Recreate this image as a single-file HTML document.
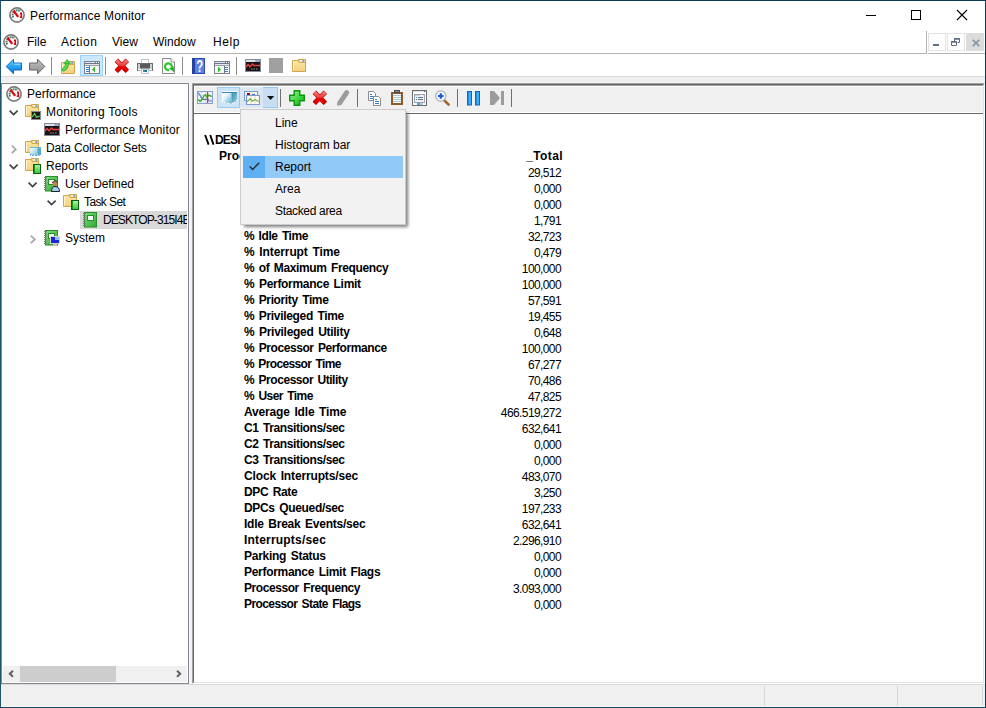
<!DOCTYPE html>
<html><head><meta charset="utf-8">
<style>
*{margin:0;padding:0;box-sizing:border-box}
html,body{width:986px;height:708px;overflow:hidden;background:#fff}
body{font-family:"Liberation Sans",sans-serif;font-size:12px;color:#000;position:relative}
.a{position:absolute}
.t{position:absolute;line-height:14px;white-space:nowrap}
.b{font-weight:bold}
svg{position:absolute;overflow:visible}
</style></head><body>
<svg width="0" height="0" style="position:absolute">
<defs>
<linearGradient id="gBlue" x1="0" y1="0" x2="0" y2="1"><stop offset="0" stop-color="#6cd0ff"/><stop offset=".5" stop-color="#2aa4f0"/><stop offset="1" stop-color="#0a6ed0"/></linearGradient>
<linearGradient id="gBlueH" x1="0" y1="0" x2="1" y2="0"><stop offset="0" stop-color="#0a78d8"/><stop offset=".6" stop-color="#40c0ff"/><stop offset="1" stop-color="#1a88e0"/></linearGradient>
<linearGradient id="gGray" x1="0" y1="0" x2="0" y2="1"><stop offset="0" stop-color="#c4c4c4"/><stop offset="1" stop-color="#8c8c8c"/></linearGradient>
<linearGradient id="gFold" x1="0" y1="0" x2="0" y2="1"><stop offset="0" stop-color="#fde6a4"/><stop offset="1" stop-color="#f3d07e"/></linearGradient>
<linearGradient id="gGreen" x1="0" y1="0" x2="1" y2="1"><stop offset="0" stop-color="#9cf59c"/><stop offset=".6" stop-color="#3cd03c"/><stop offset="1" stop-color="#18a018"/></linearGradient>
<linearGradient id="gRed" gradientUnits="userSpaceOnUse" x1="0" y1="0" x2="0" y2="16"><stop offset="0" stop-color="#f28a8a"/><stop offset=".45" stop-color="#f04040"/><stop offset=".55" stop-color="#e80000"/><stop offset="1" stop-color="#d00000"/></linearGradient>
<linearGradient id="gCube" x1="0" y1="0" x2="1" y2="1"><stop offset="0" stop-color="#ffffff"/><stop offset="1" stop-color="#7cc4dc"/></linearGradient>
<linearGradient id="gBook" x1="0" y1="0" x2="1" y2="1"><stop offset="0" stop-color="#7ee07e"/><stop offset="1" stop-color="#2ea82e"/></linearGradient>
<symbol id="iPerf" viewBox="0 0 16 16">
 <circle cx="8" cy="8" r="7.1" fill="#fff" stroke="#7c7c7c" stroke-width="1.7"/>
 <path d="M4.2 10.4A4.8 4.8 0 0 1 11.4 4.3" fill="none" stroke="#4a8068" stroke-width="2" stroke-dasharray="1.6 .5"/>
 <path d="M4.4 3.6L9.2 9.9" stroke="#e8000c" stroke-width="2.3"/>
 <path d="M11 6.4H12.3V10.3H10.8" fill="none" stroke="#e0000c" stroke-width="1.6"/>
</symbol>
<symbol id="iFolder" viewBox="0 0 14 13">
 <path d="M0.5 1.5H6L7.3 3.5H13.5V12.5H0.5Z" fill="url(#gFold)" stroke="#d0a650"/>
 <path d="M6.2 0.5H13.5V3.5H7.5Z" fill="#f9e0a0" stroke="#d0a650"/>
 <rect x="8" y="1.5" width="2.5" height="1" fill="#fff"/>
 <rect x="10.3" y="1.3" width="2" height="1.4" fill="#4a8ee0"/>
 <path d="M1.5 2.5V11.5" stroke="#fff4cc"/>
</symbol>
<symbol id="iMonMini" viewBox="0 0 10 9">
 <rect x="0.5" y="0.5" width="9" height="8" fill="#241616" stroke="#878c96"/>
 <path d="M1.2 6L3.6 2.5L5.4 6.2L8.8 5.2" fill="none" stroke="#4ed24e" stroke-width="1.3"/>
</symbol>
<symbol id="iPerfWin" viewBox="0 0 16 13">
 <rect x="0.5" y="0.5" width="15" height="12" fill="#1c1414" stroke="#868b95"/>
 <rect x="1" y="1" width="14" height="2" fill="#dde2ec"/>
 <rect x="10.5" y="1.4" width="1.2" height="1.2" fill="#3a5aa0"/><rect x="12.3" y="1.4" width="1.2" height="1.2" fill="#3a5aa0"/><rect x="14" y="1.4" width="1" height="1.2" fill="#3a5aa0"/>
 <path d="M1 8L3 5.5L5 7.8L7.5 5L9 6.5H15" fill="none" stroke="#e84040" stroke-width="1.4"/>
 <path d="M6 10H7.5M8.5 10H10M11 10H12.5" stroke="#909090"/>
</symbol>
<symbol id="iBook" viewBox="0 0 16 16">
 <rect x="2.5" y="0.5" width="12" height="14.5" fill="url(#gBook)" stroke="#2a8f2a"/>
 <rect x="5.5" y="3.5" width="6" height="5" fill="#fff" stroke="#2a8f2a"/>
 <path d="M1 1.5H3.5M1 3.5H3.5M1 5.5H3.5M1 7.5H3.5M1 9.5H3.5M1 11.5H3.5M1 13.5H3.5" stroke="#7a7a7a" stroke-width="1"/>
</symbol>
<symbol id="iGreenTab" viewBox="0 0 8 10">
 <rect x="0.5" y="0.5" width="7" height="9" fill="#189818" stroke="#0a600a"/>
 <rect x="2" y="1" width="5" height="8" fill="url(#gGTab)"/>
</symbol>
<linearGradient id="gGTab" x1="0" y1="0" x2="0" y2="1"><stop offset="0" stop-color="#a8f4a8"/><stop offset="1" stop-color="#3cc83c"/></linearGradient>
<symbol id="iCyl" viewBox="0 0 11 9">
 <rect x="0" y="0" width="11" height="1" fill="#6ab8d4"/>
 <path d="M0 1H7.5V8.5L0 7.5Z" fill="url(#gCube)"/>
 <path d="M7.5 1H11V7L7.5 8.5Z" fill="#58aac8"/>
 <g fill="#3a8ad8"><circle cx="0.6" cy="7.6" r=".8"/><circle cx="3" cy="8.3" r=".8"/><circle cx="6" cy="8.6" r=".8"/><circle cx="9" cy="8" r=".8"/><circle cx="10.6" cy="7" r=".8"/></g>
</symbol>
<symbol id="iPerson" viewBox="0 0 9 12">
 <circle cx="4" cy="3.5" r="2.5" fill="#c08050"/>
 <path d="M1.5 3C1.8 1.2 3 0.8 4 0.8C5.5 0.8 6.5 2 6.5 3.5" stroke="#303030" fill="none"/>
 <path d="M0.5 11.5Q0.5 6.5 4 6.5Q8.5 6.5 8.5 11.5Z" fill="#a8cef0" stroke="#18202a"/>
</symbol>
<symbol id="iScreen" viewBox="0 0 10 10">
 <rect x="0.5" y="0.5" width="9" height="7" fill="#1828d8" stroke="#d8d4c8"/>
 <rect x="5" y="1" width="4" height="3" fill="#9ab8f8"/>
 <rect x="3" y="8" width="4" height="2" fill="#c8c4b8"/>
</symbol>
</defs>
</svg>

<!-- window border -->
<div class="a" style="left:0;top:0;width:986px;height:708px;border:1px solid #0b3a5a;border-top-color:#0b3d5b;border-left-color:#1f566b;border-bottom-color:#0f4860;z-index:50"></div>

<!-- title bar -->
<svg style="left:9px;top:7px" width="16" height="16"><use href="#iPerf"/></svg>
<div class="t" style="left:30px;top:9px;letter-spacing:0.17px">Performance Monitor</div>
<div class="a" style="left:866px;top:15px;width:10px;height:1px;background:#000"></div>
<div class="a" style="left:911px;top:10px;width:10px;height:10px;border:1px solid #000"></div>
<svg style="left:957px;top:10px" width="10" height="10"><path d="M0 0L10 10M10 0L0 10" stroke="#000" stroke-width="1.1"/></svg>

<!-- menu bar -->
<svg style="left:3px;top:34px" width="16" height="16"><use href="#iPerf"/></svg>
<div class="t" style="left:27px;top:35px">File</div>
<div class="t" style="left:61px;top:35px;letter-spacing:0.5px">Action</div>
<div class="t" style="left:112px;top:35px">View</div>
<div class="t" style="left:153px;top:35px">Window</div>
<div class="t" style="left:213px;top:35px;letter-spacing:0.6px">Help</div>
<div class="a" style="left:1px;top:53px;width:926px;height:1px;background:#b4b4b4"></div>
<div class="a" style="left:926px;top:31px;width:1px;height:23px;background:#b4b4b4"></div>
<div class="a" style="left:928px;top:53px;width:57px;height:1px;background:#b4b4b4"></div>
<div class="a" style="left:928px;top:33px;width:18px;height:18px;border:1px solid #e3e3e3;background:#fff"></div>
<div class="a" style="left:933px;top:44px;width:6px;height:2px;background:#5f6f80"></div>
<div class="a" style="left:947px;top:33px;width:18px;height:18px;border:1px solid #e3e3e3;background:#fff"></div>
<svg style="left:951px;top:38px" width="10" height="8"><path d="M3.5 0.5H8.5V4.5H6.5M0.5 3.5H5.5V7.5H0.5Z M3.5 0.5V3.5" fill="none" stroke="#5f6f80"/><path d="M3 1H9M0 4H6" stroke="#5f6f80" stroke-width="1.4"/></svg>
<div class="a" style="left:966px;top:33px;width:18px;height:18px;background:#dcdcdc"></div>
<svg style="left:972px;top:39px" width="8" height="8"><path d="M0.8 0.8L7.2 7.2M7.2 0.8L0.8 7.2" stroke="#8796a8" stroke-width="1.8"/></svg>

<!-- main toolbar -->
<svg style="left:5px;top:58px" width="18" height="17"><path d="M1.2 8.5L8.5 1.2V5H16.5V12H8.5V15.8Z" fill="url(#gBlue)" stroke="#1a68c0"/><path d="M9.5 6.2H15.5" stroke="#a8e4ff" stroke-width="1"/></svg>
<svg style="left:28px;top:58px" width="18" height="17"><path d="M16.8 8.5L9.5 1.2V5H1.5V12H9.5V15.8Z" fill="url(#gGray)" stroke="#666"/></svg>
<div class="a" style="left:51px;top:57px;width:1px;height:18px;background:#8c8c8c"></div>
<svg style="left:61px;top:59px" width="14" height="15"><use href="#iFolder" x="0" y="2" width="14" height="13"/><path d="M2.6 10.6C4.6 9.2 6.2 7.2 6.4 3.8" fill="none" stroke="#2a9a2a" stroke-width="3.6" stroke-linecap="round"/><path d="M2.6 10.6C4.6 9.2 6.2 7.2 6.4 3.8" fill="none" stroke="#52e052" stroke-width="2.4" stroke-linecap="round"/><path d="M2.8 4.6L6.1 0.4L9.8 4.5Z" fill="#48d848" stroke="#2a9a2a" stroke-width="0.6" stroke-linejoin="round"/></svg>
<div class="a" style="left:80px;top:55px;width:23px;height:21px;background:#cce8ff;border:1px solid #99d1ff"></div>
<svg style="left:84px;top:61px" width="16" height="13"><rect width="16" height="13" fill="#7b808b"/><rect x="1" y="1" width="14" height="11" fill="#fff"/><rect x="1" y="1" width="10" height="1" fill="#e2e5ea"/><rect x="11" y="1" width="4" height="1" fill="#6a7590"/><rect x="12" y="1" width="1" height="1" fill="#fff"/><rect x="14" y="1" width="1" height="1" fill="#fff"/><rect x="1" y="2" width="14" height="1" fill="#6a7590"/><rect x="1" y="3" width="14" height="1" fill="#e2e5ea"/><rect x="1" y="4" width="14" height="1" fill="#9a9fa8"/><rect x="5" y="5" width="1" height="7" fill="#6a7590"/><rect x="6" y="5" width="9" height="7" fill="#f6f6f6"/><rect x="2" y="6" width="3" height="1" fill="#3a78c8"/><rect x="2" y="8" width="3" height="1" fill="#3a78c8"/><rect x="2" y="10" width="3" height="1" fill="#3a78c8"/><path d="M8 8.5L11 5.6V11.4Z" fill="#32b832"/></svg>
<div class="a" style="left:105px;top:57px;width:1px;height:18px;background:#8c8c8c"></div>
<svg style="left:114px;top:58px" width="16" height="16"><path d="M2.3 2.3L13.3 13.3M13.3 2.3L2.3 13.3" stroke="#b80000" stroke-width="4.8"/><path d="M2.3 2.3L13.3 13.3M13.3 2.3L2.3 13.3" stroke="url(#gRed)" stroke-width="3.6"/></svg>
<svg style="left:137px;top:59px" width="16" height="15"><rect x="4.5" y="0.5" width="7" height="4" fill="#fff" stroke="#c4c4c4"/><rect x="0.5" y="4.5" width="15" height="7" fill="#707070" stroke="#6a6a6a"/><rect x="1" y="5" width="2" height="5" fill="#c8d0d8"/><rect x="13" y="5" width="2" height="5" fill="#c8d0d8"/><rect x="3" y="5" width="10" height="4" fill="#5a5a5a"/><rect x="3" y="9" width="10" height="1" fill="#a0a0a0"/><rect x="1" y="10" width="14" height="1.5" fill="#fafafa"/><rect x="4.5" y="10.5" width="7" height="4" fill="#fff" stroke="#b8c8d8"/><rect x="6" y="11" width="2" height="2" fill="#2a8ad0"/><rect x="8" y="11" width="2" height="2" fill="#1a7a4a"/></svg>
<svg style="left:162px;top:58px" width="13" height="16"><path d="M0.5 0.5H9L12.5 4V15.5H0.5Z" fill="#fafafa" stroke="#8a8a8a"/><path d="M9 0.5V4H12.5" fill="#fff" stroke="#9a9a9a"/><path d="M9.8 9.2A3.4 3.4 0 1 0 7.2 12" fill="none" stroke="#2ec42e" stroke-width="2.2"/><path d="M6.8 10.2L12.2 14.2L11.8 8.6Z" fill="#22b822"/></svg>
<div class="a" style="left:182px;top:57px;width:1px;height:18px;background:#8c8c8c"></div>
<svg style="left:192px;top:58px" width="13" height="16"><rect width="13" height="16" fill="#2a48b0"/><rect x="0" y="0" width="3" height="16" fill="#2440a0"/><rect x="3" y="1" width="9" height="14" fill="#5a82e2"/><text transform="translate(7.6,13.9) scale(0.78,1.12)" font-family="Liberation Sans" font-weight="bold" font-size="14.5" fill="#fff" text-anchor="middle">?</text></svg>
<svg style="left:214px;top:61px" width="16" height="13"><rect width="16" height="13" fill="#7b808b"/><rect x="1" y="1" width="14" height="11" fill="#fff"/><rect x="1" y="1" width="10" height="1" fill="#e2e5ea"/><rect x="11" y="1" width="4" height="1" fill="#6a7590"/><rect x="12" y="1" width="1" height="1" fill="#fff"/><rect x="14" y="1" width="1" height="1" fill="#fff"/><rect x="1" y="2" width="14" height="1" fill="#6a7590"/><rect x="1" y="3" width="14" height="1" fill="#e2e5ea"/><rect x="1" y="4" width="14" height="1" fill="#9a9fa8"/><rect x="10" y="5" width="1" height="7" fill="#6a7590"/><rect x="1" y="5" width="9" height="7" fill="#f6f6f6"/><rect x="11" y="6" width="3" height="1" fill="#3a78c8"/><rect x="11" y="8" width="3" height="1" fill="#3a78c8"/><rect x="11" y="10" width="3" height="1" fill="#3a78c8"/><path d="M4 5.6L7 8.5L4 11.4Z" fill="#32b832"/></svg>
<div class="a" style="left:236px;top:57px;width:1px;height:18px;background:#8c8c8c"></div>
<svg style="left:245px;top:59px" width="16" height="13"><use href="#iPerfWin"/></svg>
<div class="a" style="left:269px;top:58px;width:14px;height:15px;background:#a0a0a0"></div>
<svg style="left:292px;top:59px" width="14" height="13"><use href="#iFolder" width="14" height="13"/></svg>

<!-- gray band -->
<div class="a" style="left:1px;top:76px;width:984px;height:608px;background:#f0f0f0;border-top:1px solid #dadada"></div>
<div class="a" style="left:1px;top:82px;width:984px;height:1px;background:#f5f5f5"></div>

<!-- left pane -->
<div class="a" style="left:1px;top:83px;width:188px;height:601px;border:1px solid #828790;background:#fff;overflow:hidden">
</div>
<div class="a" style="left:189px;top:82px;width:2px;height:602px;background:#f6f6f6"></div>
<div class="a" style="left:1px;top:82px;width:188px;height:1px;background:#f6f6f6"></div>

<!-- tree -->
<svg style="left:6px;top:86px" width="16" height="16"><use href="#iPerf"/></svg>
<div class="t" style="left:27px;top:87px">Performance</div>

<svg style="left:9px;top:110px" width="10" height="6"><path d="M0.6 0.6L4.6 4.6L8.6 0.6" fill="none" stroke="#404040" stroke-width="1.6"/></svg>
<svg style="left:25px;top:104px" width="16" height="16"><use href="#iFolder" width="14" height="13" y="0"/><use href="#iMonMini" x="6" y="7" width="10" height="9"/></svg>
<div class="t" style="left:46px;top:105px;letter-spacing:0.29px">Monitoring Tools</div>

<svg style="left:44px;top:123px" width="16" height="13"><use href="#iPerfWin"/></svg>
<div class="t" style="left:65px;top:123px;letter-spacing:0.15px">Performance Monitor</div>

<svg style="left:11px;top:145px" width="6" height="10"><path d="M0.8 0.6L4.8 4.4L0.8 8.2" fill="none" stroke="#a6a6a6" stroke-width="1.7"/></svg>
<svg style="left:25px;top:140px" width="16" height="16"><use href="#iFolder" width="14" height="13" y="0"/><use href="#iCyl" x="5" y="7" width="11" height="9"/></svg>
<div class="t" style="left:46px;top:141px;letter-spacing:-0.14px">Data Collector Sets</div>

<svg style="left:9px;top:164px" width="10" height="6"><path d="M0.6 0.6L4.6 4.6L8.6 0.6" fill="none" stroke="#404040" stroke-width="1.6"/></svg>
<svg style="left:25px;top:158px" width="16" height="16"><use href="#iFolder" width="14" height="13" y="0"/><use href="#iGreenTab" x="8" y="6" width="8" height="10"/></svg>
<div class="t" style="left:46px;top:159px">Reports</div>

<svg style="left:28px;top:182px" width="10" height="6"><path d="M0.6 0.6L4.6 4.6L8.6 0.6" fill="none" stroke="#404040" stroke-width="1.6"/></svg>
<svg style="left:43px;top:176px" width="17" height="16"><use href="#iBook" width="16" height="16"/><use href="#iPerson" x="8" y="4" width="9" height="12"/></svg>
<div class="t" style="left:65px;top:177px;letter-spacing:-0.1px">User Defined</div>

<svg style="left:47px;top:200px" width="10" height="6"><path d="M0.6 0.6L4.6 4.6L8.6 0.6" fill="none" stroke="#404040" stroke-width="1.6"/></svg>
<svg style="left:63px;top:194px" width="16" height="16"><use href="#iFolder" width="14" height="13" y="0"/><use href="#iGreenTab" x="8" y="6" width="8" height="10"/></svg>
<div class="t" style="left:84px;top:195px;letter-spacing:-0.6px">Task Set</div>

<div class="a" style="left:80px;top:211px;width:107px;height:18px;background:#d9d9d9"></div>
<svg style="left:82px;top:212px" width="16" height="16"><use href="#iBook" width="16" height="16"/></svg>
<div class="a" style="left:103px;top:213px;width:84px;height:14px;overflow:hidden"><div class="t" style="left:0;top:0;letter-spacing:-0.9px">DESKTOP-315I4EB_20200101-000001</div></div>

<svg style="left:30px;top:235px" width="6" height="10"><path d="M0.8 0.6L4.8 4.4L0.8 8.2" fill="none" stroke="#a6a6a6" stroke-width="1.7"/></svg>
<svg style="left:43px;top:230px" width="17" height="17"><use href="#iBook" width="16" height="16"/><use href="#iScreen" x="7" y="6" width="10" height="10"/></svg>
<div class="t" style="left:65px;top:231px">System</div>

<!-- tree scrollbar -->
<div class="a" style="left:3px;top:666px;width:184px;height:16px;background:#f0f0f0"></div>
<div class="a" style="left:20px;top:666px;width:96px;height:16px;background:#cdcdcd"></div>
<svg style="left:8px;top:670px" width="7" height="8"><path d="M5 0.7L1.8 3.7L5 6.7" fill="none" stroke="#606060" stroke-width="2"/></svg>
<svg style="left:176px;top:670px" width="7" height="8"><path d="M1 0.7L4.2 3.7L1 6.7" fill="none" stroke="#606060" stroke-width="2"/></svg>

<!-- right pane -->
<div class="a" style="left:192px;top:83px;width:793px;height:601px;background:#fff;border-top:1px solid #a0a0a0;border-left:1px solid #a0a0a0;border-right:1px solid #fff;border-bottom:1px solid #fff"></div>
<div class="a" style="left:193px;top:84px;width:791px;height:599px;border-top:1px solid #696969;border-left:1px solid #696969;border-right:1px solid #e3e3e3;border-bottom:1px solid #e3e3e3"></div>
<!-- chart toolbar -->
<div class="a" style="left:194px;top:85px;width:789px;height:1px;background:#a0a0a0"></div>
<div class="a" style="left:194px;top:86px;width:789px;height:27px;background:#f0f0f0;border-top:1px solid #fff;border-left:1px solid #fff;border-bottom:1px solid #fff"></div>
<div class="a" style="left:194px;top:113px;width:789px;height:1px;background:#696969"></div>

<svg style="left:197px;top:91px" width="16" height="13"><rect x="0.5" y="0.5" width="15" height="12" fill="#eef4fc" stroke="#87a2d4"/><path d="M4.5 1V12M8.5 1V12M1 4.5H15M1 8.5H15" stroke="#d6e2f4" stroke-width="1"/><path d="M1.2 1.6L5.6 8.4H11L12.2 10H15" fill="none" stroke="#5a78c8" stroke-width="1.1"/><path d="M1 8.6L3 10.4L5 8.5L7.3 4.2L8.6 3.8L10 6.4L12 4.1L14.6 5.6" fill="none" stroke="#32aa22" stroke-width="1.3"/><rect x="9.9" y="1" width="1.3" height="11" fill="#e63a1a"/></svg>
<div class="a" style="left:217px;top:87px;width:23px;height:21px;background:#cce4f7;border:1px solid #99ccf5"></div>
<svg style="left:221px;top:91px" width="17" height="14"><defs><linearGradient id="gCF" x1="0" y1="0" x2="1" y2="1"><stop offset="0" stop-color="#ffffff"/><stop offset=".35" stop-color="#e8f4fa"/><stop offset="1" stop-color="#58b0d2"/></linearGradient><linearGradient id="gCR" x1="0" y1="0" x2="1" y2="1"><stop offset="0" stop-color="#3f8cae"/><stop offset="1" stop-color="#8ad4de"/></linearGradient></defs><rect x="1" y="0" width="15" height="1" fill="#f4fbff"/><rect x="1" y="1" width="15" height="1.2" fill="#3f86a6"/><path d="M1 2H10.5V12.5L1 11Z" fill="url(#gCF)"/><path d="M10.5 2H16V10L10.5 12.5Z" fill="url(#gCR)"/><rect x="1" y="2" width="1" height="9" fill="#fff"/><g fill="#fff"><circle cx="0.6" cy="10.4" r=".75"/><circle cx="3.6" cy="11.6" r=".75"/><circle cx="7.5" cy="12.4" r=".75"/><circle cx="11.5" cy="12.4" r=".75"/><circle cx="13.2" cy="11.4" r=".75"/><circle cx="15.6" cy="9.6" r=".75"/></g></svg>
<div class="a" style="left:240px;top:87px;width:23px;height:21px;background:#dae7f3;border:1px solid #e2edf8;border-left:0;border-right:0"></div>
<div class="a" style="left:263px;top:87px;width:15px;height:21px;background:#c8def3;border:1px solid #92c9f6;border-left:0"></div>
<svg style="left:244px;top:91px" width="17" height="14"><rect x="0.5" y="0.5" width="13" height="9" fill="#f6f2ea" stroke="#7f9ad2"/><rect x="3" y="2" width="3" height="2" fill="#b0001a"/><rect x="8" y="3" width="3" height="1.5" fill="#3a6ae0"/><rect x="2.5" y="4.5" width="13" height="9" fill="#f0ece2" stroke="#7f9ad2"/><rect x="4" y="5" width="2" height="8" fill="#fff"/><rect x="8" y="5" width="2" height="8" fill="#fff"/><rect x="12" y="5" width="2" height="8" fill="#fff"/><path d="M3.2 10.8L6 7.6L8 10.2L11 8.6L14.6 10.6" fill="none" stroke="#66b038" stroke-width="1.2"/></svg>
<svg style="left:267px;top:96px" width="8" height="5"><path d="M0 0H7.2L3.6 4Z" fill="#111"/></svg>
<div class="a" style="left:280px;top:89px;width:1px;height:18px;background:#707070"></div>
<svg style="left:289px;top:90px" width="16" height="16"><path d="M5.2 0.7H10.8V5.2H15.3V10.8H10.8V15.3H5.2V10.8H0.7V5.2H5.2Z" fill="url(#gGreen)" stroke="#0a980a" stroke-width="1.4"/></svg>
<svg style="left:312px;top:90px" width="16" height="16"><path d="M2.3 2.3L13.3 13.3M13.3 2.3L2.3 13.3" stroke="#b80000" stroke-width="4.8"/><path d="M2.3 2.3L13.3 13.3M13.3 2.3L2.3 13.3" stroke="url(#gRed)" stroke-width="3.6"/></svg>
<svg style="left:336px;top:90px" width="14" height="16"><line x1="10.6" y1="2.6" x2="4" y2="12.6" stroke="#9c9c9c" stroke-width="5" stroke-linecap="round"/><path d="M1.8 11.2L6 14.2L1 16Z" fill="#9c9c9c"/></svg>
<div class="a" style="left:357px;top:89px;width:1px;height:18px;background:#707070"></div>
<svg style="left:368px;top:91px" width="14" height="16"><path d="M0.5 0.5H5.5L7.5 2.5V9.5H0.5Z" fill="#fff" stroke="#8c8c8c"/><rect x="2" y="3" width="2" height="1" fill="#3a78c8"/><rect x="2" y="5" width="4" height="1" fill="#3a78c8"/><rect x="2" y="7" width="4" height="1" fill="#3a78c8"/><path d="M5.5 5.5H10.5L12.5 7.5V14.5H5.5Z" fill="#fff" stroke="#8c8c8c"/><rect x="7" y="8" width="2" height="1" fill="#3a78c8"/><rect x="7" y="10" width="4" height="1" fill="#3a78c8"/><rect x="7" y="12" width="4" height="1" fill="#3a78c8"/></svg>
<svg style="left:391px;top:90px" width="13" height="15"><rect x="0" y="2" width="12" height="13" fill="#8e5a28"/><rect x="2" y="4" width="8" height="9" fill="#fff"/><rect x="2" y="5" width="8" height="1" fill="#a8c8e4"/><rect x="2" y="7" width="8" height="1" fill="#a8c8e4"/><rect x="2" y="9" width="8" height="1" fill="#a8c8e4"/><rect x="2" y="11" width="8" height="1" fill="#a8c8e4"/><rect x="3" y="0" width="6" height="3" fill="#4a4a4a"/><rect x="4" y="1" width="4" height="1" fill="#8a8a8a"/></svg>
<svg style="left:412px;top:90px" width="15" height="16"><rect x="0.5" y="0.5" width="14" height="15" fill="#fff" stroke="#6c6c6c"/><rect x="1" y="1" width="13" height="1" fill="#dfe3ea"/><rect x="12" y="1" width="1" height="1" fill="#3a5aa0"/><rect x="2.5" y="4.5" width="10" height="8" fill="#eef1f6" stroke="#9aa2b0"/><rect x="3" y="5" width="9" height="1" fill="#c8cdd6"/><rect x="8" y="5" width="3" height="1" fill="#fff"/><rect x="4" y="7" width="1" height="1" fill="#20a0f0"/><rect x="6" y="7" width="5" height="1" fill="#6a7080"/><rect x="4" y="9" width="1" height="1" fill="#6a7080"/><rect x="6" y="9" width="5" height="1" fill="#6a7080"/><rect x="5" y="13" width="3" height="2" fill="#20b8f8"/><rect x="8" y="13" width="3" height="2" fill="#c0c4cc"/></svg>
<svg style="left:434px;top:90px" width="16" height="16"><line x1="9.8" y1="9.8" x2="14.6" y2="14.6" stroke="#a0642a" stroke-width="2.6" stroke-linecap="round"/><circle cx="6.8" cy="6" r="5.1" fill="#f4faff" stroke="#a8b0bc" stroke-width="1.2"/><path d="M6.8 3.2V8.8M4 6H9.6" stroke="#1a5fd0" stroke-width="2.2"/></svg>
<div class="a" style="left:457px;top:89px;width:1px;height:18px;background:#707070"></div>
<svg style="left:467px;top:91px" width="14" height="15"><rect x="0.5" y="0.5" width="4" height="13.5" fill="url(#gBlueH)" stroke="#1466c0"/><rect x="8.5" y="0.5" width="4" height="13.5" fill="url(#gBlueH)" stroke="#1466c0"/></svg>
<svg style="left:490px;top:91px" width="15" height="15"><path d="M0 0L4 0L10 7L4 14H0Z" fill="#9c9c9c"/><rect x="11" y="0" width="3" height="14" fill="#9c9c9c"/></svg>
<div class="a" style="left:511px;top:89px;width:1px;height:18px;background:#707070"></div>

<!-- report content -->
<div class="a" style="left:194px;top:114px;width:789px;height:568px;overflow:hidden">
<svg style="left:10px;top:20px" width="11" height="11"><path d="M1.1 1L4.6 10.6M6.2 1L9.5 10.6" stroke="#000" stroke-width="1.9"/></svg><div class="t b" style="left:21px;top:19px;letter-spacing:-0.8px">DESKTOP-315I4EB</div>
<div class="t b" style="left:25px;top:35px">Processor</div>
<div class="t b" style="right:420px;top:35px;letter-spacing:0.4px">_Total</div>
</div>

<div class="t b" style="left:244px;top:165px;letter-spacing:-0.2px">% C1 Time</div>
<div class="t" style="right:425px;top:166px;letter-spacing:-0.6px">29,512</div>
<div class="t b" style="left:244px;top:181px;letter-spacing:-0.2px">% C2 Time</div>
<div class="t" style="right:425px;top:182px;letter-spacing:-0.6px">0,000</div>
<div class="t b" style="left:244px;top:197px;letter-spacing:-0.2px">% C3 Time</div>
<div class="t" style="right:425px;top:198px;letter-spacing:-0.6px">0,000</div>
<div class="t b" style="left:244px;top:213px;letter-spacing:-0.2px">% DPC Time</div>
<div class="t" style="right:425px;top:214px;letter-spacing:-0.6px">1,791</div>
<div class="t b" style="left:244px;top:229px;letter-spacing:-0.44px;word-spacing:1.5px">% Idle Time</div>
<div class="t" style="right:425px;top:230px;letter-spacing:-0.6px">32,723</div>
<div class="t b" style="left:244px;top:245px;letter-spacing:-0.1px;word-spacing:1.5px">% Interrupt Time</div>
<div class="t" style="right:425px;top:246px;letter-spacing:-0.6px">0,479</div>
<div class="t b" style="left:244px;top:261px;letter-spacing:-0.371px;word-spacing:1.5px">% of Maximum Frequency</div>
<div class="t" style="right:425px;top:262px;letter-spacing:-0.6px">100,000</div>
<div class="t b" style="left:244px;top:277px;letter-spacing:-0.294px;word-spacing:1.5px">% Performance Limit</div>
<div class="t" style="right:425px;top:278px;letter-spacing:-0.6px">100,000</div>
<div class="t b" style="left:244px;top:293px;letter-spacing:-0.379px;word-spacing:1.5px">% Priority Time</div>
<div class="t" style="right:425px;top:294px;letter-spacing:-0.6px">57,591</div>
<div class="t b" style="left:244px;top:309px;letter-spacing:-0.331px;word-spacing:1.5px">% Privileged Time</div>
<div class="t" style="right:425px;top:310px;letter-spacing:-0.6px">19,455</div>
<div class="t b" style="left:244px;top:325px;letter-spacing:-0.274px;word-spacing:1.5px">% Privileged Utility</div>
<div class="t" style="right:425px;top:326px;letter-spacing:-0.6px">0,648</div>
<div class="t b" style="left:244px;top:341px;letter-spacing:-0.423px;word-spacing:1.5px">% Processor Performance</div>
<div class="t" style="right:425px;top:342px;letter-spacing:-0.6px">100,000</div>
<div class="t b" style="left:244px;top:357px;letter-spacing:-0.62px;word-spacing:1.5px">% Processor Time</div>
<div class="t" style="right:425px;top:358px;letter-spacing:-0.6px">67,277</div>
<div class="t b" style="left:244px;top:373px;letter-spacing:-0.461px;word-spacing:1.5px">% Processor Utility</div>
<div class="t" style="right:425px;top:374px;letter-spacing:-0.6px">70,486</div>
<div class="t b" style="left:244px;top:389px;letter-spacing:-0.54px;word-spacing:1.5px">% User Time</div>
<div class="t" style="right:425px;top:390px;letter-spacing:-0.6px">47,825</div>
<div class="t b" style="left:244px;top:405px;letter-spacing:-0.169px;word-spacing:1.5px">Average Idle Time</div>
<div class="t" style="right:425px;top:406px;letter-spacing:-0.6px">466.519,272</div>
<div class="t b" style="left:244px;top:421px;letter-spacing:-0.388px;word-spacing:1.5px">C1 Transitions/sec</div>
<div class="t" style="right:425px;top:422px;letter-spacing:-0.6px">632,641</div>
<div class="t b" style="left:244px;top:437px;letter-spacing:-0.388px;word-spacing:1.5px">C2 Transitions/sec</div>
<div class="t" style="right:425px;top:438px;letter-spacing:-0.6px">0,000</div>
<div class="t b" style="left:244px;top:453px;letter-spacing:-0.388px;word-spacing:1.5px">C3 Transitions/sec</div>
<div class="t" style="right:425px;top:454px;letter-spacing:-0.6px">0,000</div>
<div class="t b" style="left:244px;top:469px;letter-spacing:-0.142px;word-spacing:1.5px">Clock Interrupts/sec</div>
<div class="t" style="right:425px;top:470px;letter-spacing:-0.6px">483,070</div>
<div class="t b" style="left:244px;top:485px;letter-spacing:-0.357px;word-spacing:1.5px">DPC Rate</div>
<div class="t" style="right:425px;top:486px;letter-spacing:-0.6px">3,250</div>
<div class="t b" style="left:244px;top:501px;letter-spacing:-0.329px;word-spacing:1.5px">DPCs Queued/sec</div>
<div class="t" style="right:425px;top:502px;letter-spacing:-0.6px">197,233</div>
<div class="t b" style="left:244px;top:517px;letter-spacing:-0.24px;word-spacing:1.5px">Idle Break Events/sec</div>
<div class="t" style="right:425px;top:518px;letter-spacing:-0.6px">632,641</div>
<div class="t b" style="left:244px;top:533px;letter-spacing:0.192px;word-spacing:1.5px">Interrupts/sec</div>
<div class="t" style="right:425px;top:534px;letter-spacing:-0.6px">2.296,910</div>
<div class="t b" style="left:244px;top:549px;letter-spacing:-0.269px;word-spacing:1.5px">Parking Status</div>
<div class="t" style="right:425px;top:550px;letter-spacing:-0.6px">0,000</div>
<div class="t b" style="left:244px;top:565px;letter-spacing:-0.295px;word-spacing:1.5px">Performance Limit Flags</div>
<div class="t" style="right:425px;top:566px;letter-spacing:-0.6px">0,000</div>
<div class="t b" style="left:244px;top:581px;letter-spacing:-0.428px;word-spacing:1.5px">Processor Frequency</div>
<div class="t" style="right:425px;top:582px;letter-spacing:-0.6px">3.093,000</div>
<div class="t b" style="left:244px;top:597px;letter-spacing:-0.595px;word-spacing:1.5px">Processor State Flags</div>
<div class="t" style="right:425px;top:598px;letter-spacing:-0.6px">0,000</div>
<!-- popup -->
<div class="a" style="left:240px;top:109px;width:166px;height:116px;background:#f2f2f2;border:1px solid #cccccc;box-shadow:3px 3px 3px -1px rgba(0,0,0,0.5)"></div>
<div class="a" style="left:243px;top:156px;width:160px;height:22px;background:#91c9f7"></div>
<div class="a" style="left:243px;top:156px;width:22px;height:22px;background:#5eb0f2"></div>
<svg style="left:249px;top:162px" width="11" height="9"><path d="M0.8 4.5L3.6 7.5L10.2 0.8" fill="none" stroke="#2a2a2a" stroke-width="1.4"/></svg>
<div class="t" style="left:275px;top:116px">Line</div>
<div class="t" style="left:275px;top:138px">Histogram bar</div>
<div class="t" style="left:275px;top:160px">Report</div>
<div class="t" style="left:275px;top:182px">Area</div>
<div class="t" style="left:275px;top:204px;letter-spacing:-0.33px">Stacked area</div>

<!-- status bar -->
<div class="a" style="left:1px;top:684px;width:984px;height:23px;background:#f0f0f0;border-top:1px solid #dadada;border-bottom:1px solid #fcfaf8"></div>
<div class="a" style="left:764px;top:686px;width:1px;height:20px;background:#d6d6d6"></div>
<div class="a" style="left:897px;top:686px;width:1px;height:20px;background:#d6d6d6"></div>
<div class="a" style="left:982px;top:686px;width:1px;height:20px;background:#d6d6d6"></div>

</body></html>
